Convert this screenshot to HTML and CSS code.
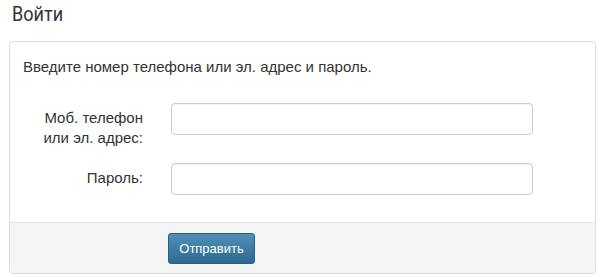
FILE: index.html
```html
<!DOCTYPE html>
<html lang="ru">
<head>
    <meta charset="UTF-8">
    <title>Войти</title>
    <link rel="stylesheet" href="styles.css">
</head>
<body>

<h1 class="page-title"><span>Войти</span></h1>

<!-- форма входа -->
<form class="login-box">
    <div class="login-body">
        <p class="login-hint">Введите номер телефона или эл. адрес и пароль.</p>

        <div class="form-row">
            <label class="form-label" for="login">Моб. телефон<br>или эл. адрес:</label>
            <input class="form-input" type="text" id="login">
        </div>
        <div class="form-row">
            <label class="form-label" for="password">Пароль:</label>
            <input class="form-input" type="password" id="password">
        </div>
    </div>

    <div class="login-footer">
        <button type="button" class="btn-submit">Отправить</button>
    </div>
</form>

</body>
</html>
```

FILE: styles.css
```css
/* базовые стили */
body {
    margin: 0;
    padding: 0 4px 0 9px;
    font-family: "Liberation Sans", Arial, sans-serif;
    font-size: 15px;
    line-height: 20px;
    color: #333;
    background: #fff;
}
.page-title {
    margin: 0 0 12px 3px;
    font-family: Roboto, "Open Sans", sans-serif;
    font-size: 21px;
    font-weight: normal;
    line-height: 29px;
    color: #333;
}
.page-title span {
    display: inline-block;
    transform: scaleX(0.86);
    transform-origin: left center;
}
/* блок формы */
.login-box {
    border: 1px solid #ddd;
    border-radius: 4px;
    overflow: hidden;
}
.login-body {
    padding: 15px 13px 12px;
}
.login-hint {
    margin: 0 0 26px;
}
.form-row {
    display: flex;
    align-items: flex-start;
    gap: 28px;
    margin-bottom: 15px;
}
.form-label {
    width: 120px;
    flex-shrink: 0;
    padding-top: 5px;
    text-align: right;
}
.form-input {
    box-sizing: border-box;
    width: 362px;
    height: 32px;
    padding: 4px 10px;
    border: 1px solid #ccc;
    border-radius: 4px;
    box-shadow: inset 0 1px 1px rgba(0, 0, 0, 0.05);
    font: inherit;
}
/* нижняя панель с кнопкой */
.login-footer {
    padding: 10px 0 9px 158px;
    background-color: #f5f5f5;
    border-top: 1px solid #e3e3e3;
}
.btn-submit {
    box-sizing: border-box;
    width: 87px;
    height: 31px;
    padding: 0;
    border: 1px solid #2a5f84;
    border-radius: 3px;
    background: linear-gradient(to bottom, #4f8fb8, #2d6a92);
    color: #fff;
    font-family: "Liberation Sans", Arial, sans-serif;
    font-size: 13px;
    cursor: pointer;
}
```
